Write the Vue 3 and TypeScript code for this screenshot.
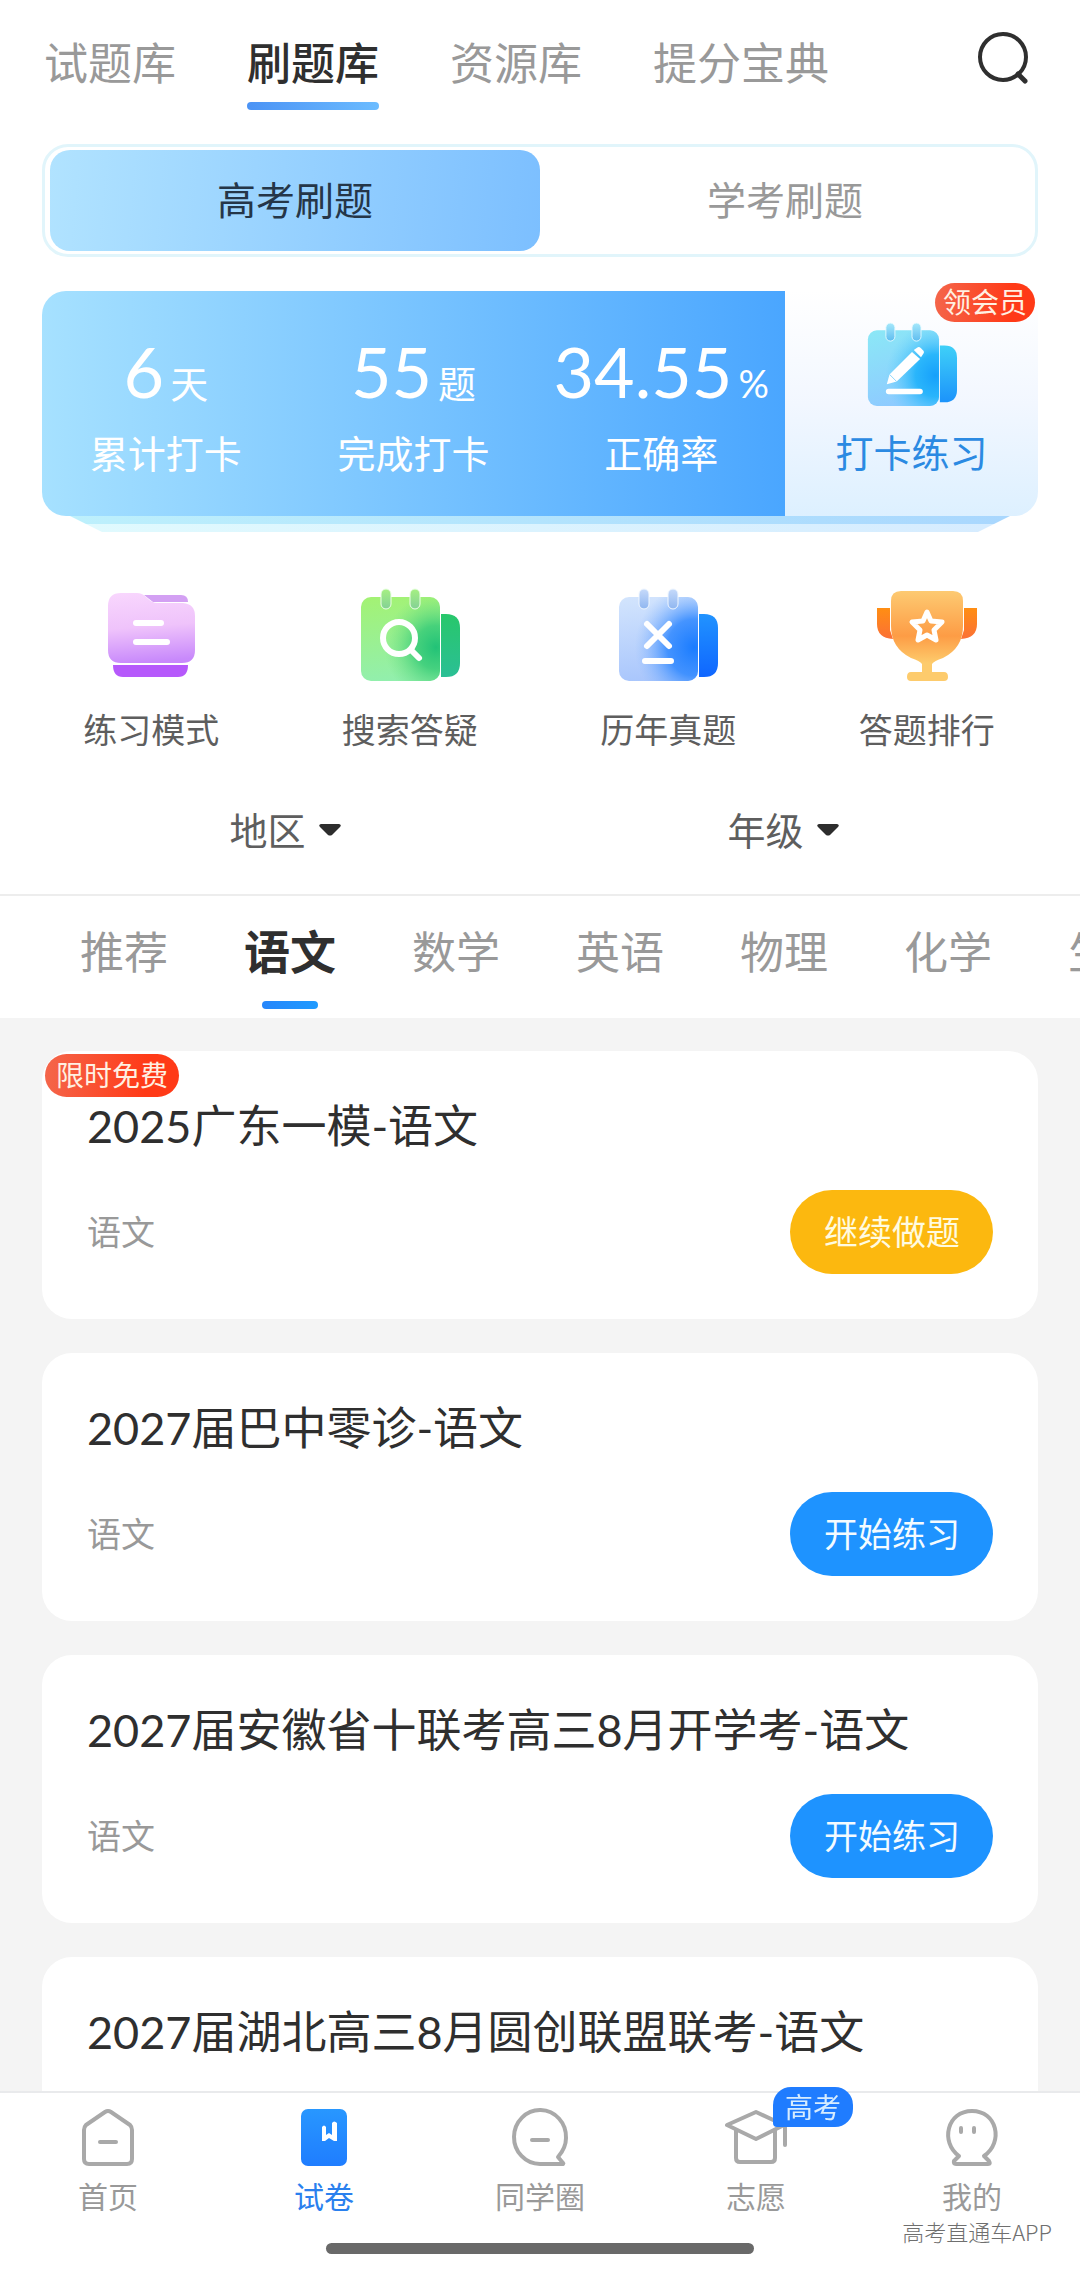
<script setup lang="ts">
import { ref } from 'vue'

interface Stat {
  value: string
  unit: string
  label: string
}

interface Paper {
  title: string
  subject: string
  started: boolean
  free: boolean
}

const sections: string[] = ['试题库', '刷题库', '资源库', '提分宝典']
const activeSection = ref('刷题库')

const modes: string[] = ['高考刷题', '学考刷题']
const activeMode = ref('高考刷题')

const stats: Stat[] = [
  { value: '6', unit: '天', label: '累计打卡' },
  { value: '55', unit: '题', label: '完成打卡' },
  { value: '34.55', unit: '%', label: '正确率' },
]

const filters: string[] = ['地区', '年级']

const subjects: string[] = ['推荐', '语文', '数学', '英语', '物理', '化学', '生物']
const activeSubject = ref('语文')

const papers: Paper[] = [
  { title: '2025广东一模-语文', subject: '语文', started: true, free: true },
  { title: '2027届巴中零诊-语文', subject: '语文', started: false, free: false },
  { title: '2027届安徽省十联考高三8月开学考-语文', subject: '语文', started: false, free: false },
  { title: '2027届湖北高三8月圆创联盟联考-语文', subject: '语文', started: false, free: false },
]
</script>

<template>
  <div class="app">
    <header class="header">
      <nav class="sections">
        <button
          v-for="s in sections"
          :key="s"
          type="button"
          class="section"
          :class="{ active: s === activeSection }"
          @click="activeSection = s"
        >
          {{ s }}
        </button>
      </nav>
      <button type="button" class="search" aria-label="搜索">
        <svg viewBox="0 0 60 60" fill="none" stroke="#2f2f2f" stroke-width="4" stroke-linecap="round">
          <circle cx="29" cy="29" r="23" />
          <path d="M44 46 L51 53" stroke-width="5" />
        </svg>
      </button>
    </header>

    <div class="modes">
      <button
        v-for="m in modes"
        :key="m"
        type="button"
        class="mode"
        :class="{ active: m === activeMode }"
        @click="activeMode = m"
      >
        {{ m }}
      </button>
    </div>

    <section class="board">
      <div class="board-main">
        <div class="stats">
          <div v-for="s in stats" :key="s.label" class="stat">
            <p class="figure">
              <span class="value">{{ s.value }}</span><span class="unit">{{ s.unit }}</span>
            </p>
            <p class="stat-label">{{ s.label }}</p>
          </div>
        </div>
        <button type="button" class="checkin">
          <svg class="checkin-icon" viewBox="0 0 100 94" fill="none">
            <defs>
              <linearGradient id="ckBack" x1="0" y1="0" x2="0" y2="1">
                <stop offset="0" stop-color="#3fd0f8" />
                <stop offset="1" stop-color="#1c93fb" />
              </linearGradient>
              <linearGradient id="ckPage" x1="0" y1="0" x2="0.3" y2="1">
                <stop offset="0" stop-color="#8be8f6" />
                <stop offset="1" stop-color="#8ecbff" />
              </linearGradient>
              <radialGradient id="ckGlow" cx="0.95" cy="0.6" r="0.7">
                <stop offset="0" stop-color="#16a0fb" />
                <stop offset="0.4" stop-color="#1fb2fb" stop-opacity="0.9" />
                <stop offset="1" stop-color="#5fd0fb" stop-opacity="0" />
              </radialGradient>
              <linearGradient id="ckRing" x1="0" y1="0" x2="0" y2="1">
                <stop offset="0" stop-color="#a5e8fb" />
                <stop offset="1" stop-color="#5fbdf0" />
              </linearGradient>
            </defs>
            <path d="M81 26 H86 Q100 26 100 40 V75 Q100 89 86 89 H81 Z" fill="url(#ckBack)" />
            <rect x="1" y="9" width="79" height="84" rx="10" fill="url(#ckPage)" />
            <rect x="1" y="9" width="79" height="84" rx="10" fill="url(#ckGlow)" />
            <g fill="url(#ckRing)" stroke="#e6fbff" stroke-width="1">
              <rect x="21" y="1" width="10" height="20" rx="5" />
              <rect x="50" y="1" width="10" height="20" rx="5" />
            </g>
            <g fill="#fff">
              <path d="M22 69 L25 58 L50 33 L59 41 L33 66 Z" />
              <path d="M52 31 L56 28 Q58 27 60 29 L63 32 Q64 34 62 36 L60 39 Z" />
              <rect x="21" y="74" width="41" height="6" rx="3" />
            </g>
            <path d="M25 58 L33 66" stroke="#86d4fc" stroke-width="1" />
          </svg>
          <span class="checkin-label">打卡练习</span>
          <span class="badge member">领会员</span>
        </button>
      </div>
      <div class="layer first"></div>
      <div class="layer second"></div>
    </section>

    <nav class="tools">
      <a href="#" class="tool">
        <svg viewBox="0 0 100 94" fill="none">
          <defs>
            <linearGradient id="fdFront" x1="0.2" y1="0" x2="0.3" y2="1">
              <stop offset="0" stop-color="#f8d6fd" />
              <stop offset="0.5" stop-color="#efc3fb" />
              <stop offset="1" stop-color="#c889fb" />
            </linearGradient>
          </defs>
          <path d="M43 7 H80 Q87 7 87 14 H52 Z" fill="#d3a0f3" />
          <path d="M12 77 H87 Q87 89 77 89 H22 Q12 89 12 77 Z" fill="#b659fb" />
          <path
            d="M20 5 H36 Q41 5 45 9 Q51 15 56 15 H82 Q94 16 94 28 V62 Q94 75 81 75 H20 Q7 75 7 62 V18 Q7 5 20 5 Z"
            fill="url(#fdFront)"
          />
          <path d="M35 35 H60 M35 54 H66" stroke="#fff" stroke-width="6" stroke-linecap="round" />
        </svg>
        <span>练习模式</span>
      </a>
      <a href="#" class="tool">
        <svg viewBox="0 0 100 94" fill="none">
          <defs>
            <linearGradient id="grBack" x1="0" y1="0" x2="0" y2="1">
              <stop offset="0" stop-color="#28c76b" />
              <stop offset="1" stop-color="#2bbf95" />
            </linearGradient>
            <linearGradient id="grPage" x1="0.2" y1="0" x2="0.3" y2="1">
              <stop offset="0" stop-color="#a3f274" />
              <stop offset="1" stop-color="#92efad" />
            </linearGradient>
            <radialGradient id="grGlow" cx="0.95" cy="0.6" r="0.65">
              <stop offset="0" stop-color="#22c277" />
              <stop offset="0.4" stop-color="#38cc78" stop-opacity="0.85" />
              <stop offset="1" stop-color="#70e080" stop-opacity="0" />
            </radialGradient>
            <linearGradient id="grRing" x1="0" y1="0" x2="0" y2="1">
              <stop offset="0" stop-color="#a6f082" />
              <stop offset="1" stop-color="#83d196" />
            </linearGradient>
          </defs>
          <path d="M81 26 H86 Q100 26 100 40 V75 Q100 89 86 89 H81 Z" fill="url(#grBack)" />
          <rect x="1" y="9" width="79" height="84" rx="10" fill="url(#grPage)" />
          <rect x="1" y="9" width="79" height="84" rx="10" fill="url(#grGlow)" />
          <g fill="url(#grRing)" stroke="#ebffe6" stroke-width="1">
            <rect x="21" y="1" width="10" height="20" rx="5" />
            <rect x="50" y="1" width="10" height="20" rx="5" />
          </g>
          <g stroke="#fff" stroke-width="6" stroke-linecap="round">
            <circle cx="39" cy="50" r="16" />
            <path d="M51 62 L59 70" />
          </g>
        </svg>
        <span>搜索答疑</span>
      </a>
      <a href="#" class="tool">
        <svg viewBox="0 0 100 94" fill="none">
          <defs>
            <linearGradient id="blBack" x1="0" y1="0" x2="0" y2="1">
              <stop offset="0" stop-color="#2193ff" />
              <stop offset="1" stop-color="#0f66ff" />
            </linearGradient>
            <linearGradient id="blPage" x1="0.2" y1="0" x2="0.3" y2="1">
              <stop offset="0" stop-color="#d2e4fd" />
              <stop offset="1" stop-color="#a9c6fc" />
            </linearGradient>
            <radialGradient id="blGlow" cx="0.95" cy="0.6" r="0.75">
              <stop offset="0" stop-color="#1a7cff" />
              <stop offset="0.45" stop-color="#2f88ff" stop-opacity="0.85" />
              <stop offset="1" stop-color="#8ab8ff" stop-opacity="0" />
            </radialGradient>
            <linearGradient id="blRing" x1="0" y1="0" x2="0" y2="1">
              <stop offset="0" stop-color="#c6dafa" />
              <stop offset="1" stop-color="#8fb6f0" />
            </linearGradient>
          </defs>
          <path d="M81 26 H86 Q100 26 100 40 V75 Q100 89 86 89 H81 Z" fill="url(#blBack)" />
          <rect x="1" y="9" width="79" height="84" rx="10" fill="url(#blPage)" />
          <rect x="1" y="9" width="79" height="84" rx="10" fill="url(#blGlow)" />
          <g fill="url(#blRing)" stroke="#f0f7ff" stroke-width="1">
            <rect x="21" y="1" width="10" height="20" rx="5" />
            <rect x="50" y="1" width="10" height="20" rx="5" />
          </g>
          <path
            d="M29 36 L51 58 M51 36 L29 58 M27 73 H53"
            stroke="#fff"
            stroke-width="6"
            stroke-linecap="round"
          />
        </svg>
        <span>历年真题</span>
      </a>
      <a href="#" class="tool">
        <svg viewBox="0 0 100 94" fill="none">
          <defs>
            <linearGradient id="tpCup" x1="0" y1="0" x2="0" y2="1">
              <stop offset="0" stop-color="#fdca72" />
              <stop offset="0.5" stop-color="#fd9c45" />
              <stop offset="0.8" stop-color="#fdcb6c" />
            </linearGradient>
            <linearGradient id="tpEar" x1="0" y1="0" x2="0" y2="1">
              <stop offset="0" stop-color="#ff8e13" />
              <stop offset="1" stop-color="#fb7036" />
            </linearGradient>
          </defs>
          <path d="M0 20 H13 V42 L16 51 Q0 50 0 36 Z" fill="url(#tpEar)" />
          <path d="M100 20 H87 V42 L84 51 Q100 50 100 36 Z" fill="url(#tpEar)" />
          <path
            d="M24 3 H76 Q86 3 86 13 V38 Q86 60 66 70 Q57 73 55 76 V84 H67 Q71 84 71 89 Q71 93 67 93 H34 Q30 93 30 89 Q30 84 34 84 H45 V76 Q43 73 34 70 Q14 60 14 38 V13 Q14 3 24 3 Z"
            fill="url(#tpCup)"
          />
          <path
            d="M50 24 L54 33 L65 34 L57 42 L59 52 L50 47 L41 52 L43 42 L35 34 L46 33 Z"
            stroke="#fff"
            stroke-width="5"
            stroke-linejoin="round"
          />
        </svg>
        <span>答题排行</span>
      </a>
    </nav>

    <div class="filters">
      <label v-for="f in filters" :key="f" class="filter">
        <select :aria-label="f">
          <option>{{ f }}</option>
        </select>
        <svg viewBox="0 0 22 12"><path d="M2 0 H20 Q23 1 21 3 L13 11 Q11 12 9 11 L1 3 Q-1 1 2 0 Z" fill="#2d2d2d" /></svg>
      </label>
    </div>

    <nav class="subjects">
      <button
        v-for="s in subjects"
        :key="s"
        type="button"
        class="subject"
        :class="{ active: s === activeSubject }"
        @click="activeSubject = s"
      >
        {{ s }}
      </button>
    </nav>

    <main class="papers">
      <article v-for="p in papers" :key="p.title" class="paper">
        <span v-if="p.free" class="badge free">限时免费</span>
        <h2>{{ p.title }}</h2>
        <div class="paper-row">
          <span class="paper-subject">{{ p.subject }}</span>
          <button type="button" class="start" :class="{ resume: p.started }">
            {{ p.started ? '继续做题' : '开始练习' }}
          </button>
        </div>
      </article>
    </main>

    <footer class="footer">
      <nav class="tabbar">
        <a href="#" class="tab">
          <svg viewBox="0 0 60 60">
            <path d="M27 5 Q30 3 33 5 L52 18 Q54 20 54 23 V52 Q54 57 49 57 H11 Q6 57 6 52 V23 Q6 20 8 18 Z" />
            <path d="M22 35 H38" />
          </svg>
          <span>首页</span>
        </a>
        <a href="#" class="tab current">
          <svg viewBox="0 0 60 60">
            <defs>
              <linearGradient id="bookFill" x1="0" y1="0" x2="0" y2="1">
                <stop offset="0" stop-color="#2897ff" />
                <stop offset="1" stop-color="#1f7dff" />
              </linearGradient>
            </defs>
            <rect x="7" y="2" width="46" height="57" rx="7" fill="url(#bookFill)" stroke="none" />
            <path d="M28 20 Q30 17 32 20 V28 L35 26 L38 28 V16 Q40 13 43 16 V34 L40 34 L35 31 L31 34 L28 34 Z" fill="#fff" stroke="none" />
          </svg>
          <span>试卷</span>
        </a>
        <a href="#" class="tab">
          <svg viewBox="0 0 60 60">
            <path d="M30 57 A26 27 0 1 1 56 31 Q56 41 48 50 L53 56 Q54 57 52 57 Z" />
            <path d="M22 33 H38" />
          </svg>
          <span>同学圈</span>
        </a>
        <a href="#" class="tab">
          <svg viewBox="0 0 60 60">
            <path d="M1 18 L30 5 L58 18 L30 32 Z" />
            <path d="M10 23 V51 Q10 55 14 55 H45 Q49 55 49 51 V23" />
            <path d="M59 19 V38" />
          </svg>
          <span>志愿</span>
          <span class="exam">高考</span>
        </a>
        <a href="#" class="tab">
          <svg viewBox="0 0 60 60">
            <path d="M17 49 C-2 35 5 4 30 4 C55 4 62 35 42 49 L47 54 Q49 57 46 57 H14 Q11 57 12 54 Z" />
            <path d="M19 21 V25 M32 21 V25" stroke-width="4" />
          </svg>
          <span>我的</span>
        </a>
      </nav>
      <div class="home-indicator"></div>
      <span class="watermark">高考直通车APP</span>
    </footer>
  </div>
</template>

<style>
body {
  margin: 0;
}
</style>

<style scoped>
.app {
  display: flex;
  flex-direction: column;
  height: 100vh;
  background: #fff;
  color: #2f2f2f;
  font-family: Lato, 'Noto Sans CJK SC', sans-serif;
  overflow: hidden;
}

.app > * {
  flex-shrink: 0;
}

button,
select {
  margin: 0;
  padding: 0;
  border: 0;
  background: none;
  color: inherit;
  font: inherit;
  white-space: nowrap;
}

a {
  color: inherit;
  text-decoration: none;
}

p,
h2 {
  margin: 0;
  font-weight: 400;
}

svg {
  display: block;
  overflow: visible;
}

.header {
  display: flex;
  justify-content: space-between;
  align-items: flex-start;
  padding: 28px 46px 0 44px;
}

.sections {
  display: flex;
  gap: 71px;
  padding-top: 5px;
}

.section {
  display: flex;
  flex-direction: column;
  gap: 9px;
  font-size: 44px;
  line-height: 60px;
  color: #999;
}

.section::after {
  content: '';
  width: 100%;
  height: 8px;
  border-radius: 4px;
}

.section.active {
  color: #2f2f2f;
  font-weight: 500;
}

.section.active::after {
  background: linear-gradient(90deg, #4b93f5, #6cbcff);
}

.search svg {
  width: 60px;
  height: 60px;
}

.modes {
  display: flex;
  margin: 34px 42px 0;
  padding: 3px 5px;
  border: 3px solid #e1f5fb;
  border-radius: 26px;
}

.mode {
  flex: 1;
  height: 101px;
  padding-bottom: 5px;
  border-radius: 20px;
  font-size: 39px;
  color: #999;
}

.mode.active {
  background: linear-gradient(95deg, #b1e3ff, #7cbfff);
  color: #253648;
}

.board {
  margin: 34px 42px 0;
}

.board-main {
  display: flex;
  height: 225px;
}

.stats {
  flex: 743;
  display: flex;
  border-radius: 24px 0 0 24px;
  background: linear-gradient(90deg, #a6e1ff, #4aa6ff);
  color: #fff;
}

.stat {
  flex: 1 1 0;
  display: flex;
  flex-direction: column;
  align-items: center;
  padding-top: 40px;
}

.figure {
  display: flex;
  align-items: baseline;
  gap: 6px;
  height: 92px;
  line-height: 80px;
}

.value {
  font-size: 70px;
}

.unit {
  font-size: 38px;
}

.stat-label,
.checkin-label {
  font-size: 38px;
  line-height: 48px;
}

.stat-label {
  margin-top: 6px;
}

.checkin {
  position: relative;
  flex: 253;
  display: flex;
  flex-direction: column;
  align-items: center;
  padding-top: 31px;
  gap: 21px;
  border-radius: 0 24px 24px 0;
  background: linear-gradient(180deg, #fff, #f2f7ff 50%, #ddf0ff);
  color: #2b8ae2;
}

.checkin-icon {
  width: 90px;
  height: 85px;
}

.badge {
  position: absolute;
  border-radius: 22px;
  background: linear-gradient(95deg, #f4664b, #ff3a17 75%);
  color: #fff0e2;
  font-size: 28px;
}

.member {
  top: -8px;
  right: 3px;
  padding: 0 8px;
  line-height: 39px;
}

.layer {
  height: 8px;
}

.first {
  margin: 0 28px;
  background: linear-gradient(90deg, #bdf0fc, #a9d7fe);
  clip-path: polygon(0 0, 100% 0, calc(100% - 16px) 100%, 16px 100%);
}

.second {
  margin: 0 44px;
  background: linear-gradient(90deg, #e0fafe, #d6ecff);
  clip-path: polygon(0 0, 100% 0, calc(100% - 16px) 100%, 16px 100%);
}

.tools {
  display: flex;
  margin: 56px 24px 0 22px;
}

.tool {
  flex: 1 1 0;
  display: flex;
  flex-direction: column;
  align-items: center;
  gap: 24px;
  color: #5e5e5e;
  font-size: 34px;
  line-height: 48px;
}

.tool svg {
  width: 100px;
  height: 94px;
}

.filters {
  display: flex;
  margin: 52px 48px 0 36px;
  padding-bottom: 40px;
}

.filter {
  flex: 1;
  display: flex;
  justify-content: center;
  align-items: center;
  gap: 12px;
  color: #5e5e5e;
  font-size: 38px;
  line-height: 48px;
}

.filter select {
  height: 48px;
  appearance: none;
}

.filter svg {
  width: 22px;
  height: 12px;
}

.subjects {
  display: flex;
  gap: 76px;
  padding: 26px 0 9px 80px;
  border-top: 2px solid #ededed;
  overflow: hidden;
}

.subject {
  flex-shrink: 0;
  display: flex;
  flex-direction: column;
  align-items: center;
  gap: 19px;
  font-size: 44px;
  line-height: 60px;
  color: #999;
}

.subject::after {
  content: '';
  width: 56px;
  height: 8px;
  border-radius: 4px;
}

.subject.active {
  color: #2f2f2f;
  font-size: 46px;
  font-weight: 700;
}

.subject.active::after {
  background: linear-gradient(90deg, #2686fb, #1f9bff);
}

.app > .papers {
  flex: 1 1 0;
  min-height: 0;
  display: flex;
  flex-direction: column;
  gap: 34px;
  padding: 33px 42px 0;
  background: #f4f4f4;
  overflow-y: auto;
  scrollbar-width: none;
}

.paper {
  position: relative;
  flex-shrink: 0;
  padding: 45px;
  border-radius: 30px;
  background: #fff;
}

.paper h2 {
  font-size: 45px;
  line-height: 60px;
  white-space: nowrap;
}

.free {
  top: 3px;
  left: 3px;
  padding: 0 11px;
  line-height: 43px;
}

.paper-row {
  display: flex;
  justify-content: space-between;
  align-items: center;
  margin-top: 34px;
}

.paper-subject {
  padding-bottom: 4px;
  color: #999;
  font-size: 34px;
}

.start {
  height: 84px;
  padding: 0 33px 4px 34px;
  border-radius: 42px;
  background: #1e93ff;
  color: #f4fbff;
  font-size: 34px;
}

.start.resume {
  background: #fcb80f;
  color: #fffbe0;
}

.footer {
  position: relative;
  display: flex;
  flex-direction: column;
  align-items: center;
  border-top: 2px solid #e9eaec;
  padding: 14px 0 17px;
  background: #fff;
}

.tabbar {
  display: flex;
  width: 100%;
}

.tab {
  position: relative;
  flex: 1 1 0;
  display: flex;
  flex-direction: column;
  align-items: center;
  gap: 8px;
  color: #999;
  font-size: 30px;
  line-height: 42px;
}

.tab svg {
  width: 60px;
  height: 60px;
  fill: none;
  stroke: #a9a9a9;
  stroke-width: 4;
  stroke-linecap: round;
  stroke-linejoin: round;
}

.current {
  color: #2a80ee;
}

.exam {
  position: absolute;
  top: -20px;
  left: calc(50% + 17px);
  padding: 0 12px;
  border-radius: 18px 18px 18px 4px;
  background: #1f7cff;
  color: #d6ecff;
  font-size: 28px;
  line-height: 40px;
}

.home-indicator {
  width: 428px;
  height: 11px;
  margin-top: 26px;
  border-radius: 6px;
  background: #696969;
}

.watermark {
  position: absolute;
  right: 28px;
  bottom: 24px;
  color: #6f6f6f;
  font-family: 'Noto Sans CJK SC', sans-serif;
  font-size: 22px;
  font-weight: 300;
  line-height: 32px;
}
</style>
